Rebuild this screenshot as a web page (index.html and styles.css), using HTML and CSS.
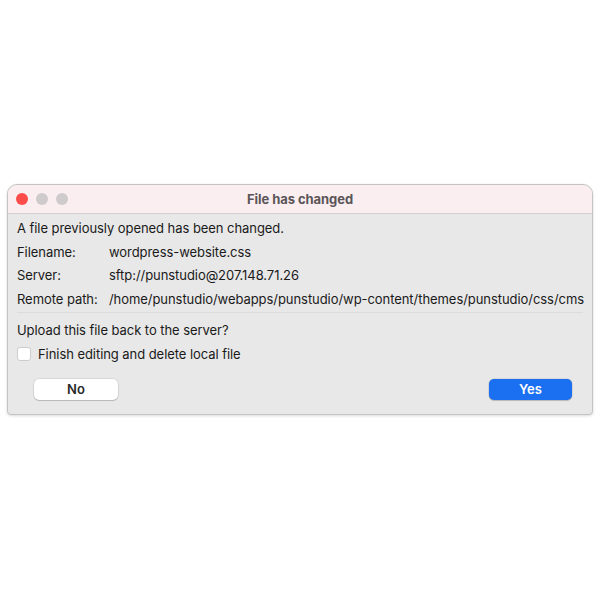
FILE: index.html
```html
<!DOCTYPE html>
<html lang="en">
<head>
    <meta charset="UTF-8">
    <meta name="viewport" content="width=device-width, initial-scale=1.0">
    <title>File has changed</title>
    <link rel="stylesheet" href="styles.css">
</head>
<body>
    <div class="dialog">
        <div class="titlebar">
            <div class="lights">
                <span class="light close"></span>
                <span class="light"></span>
                <span class="light"></span>
            </div>
            <div class="title">File has changed</div>
        </div>

        <div class="content">
            <p class="line">A file previously opened has been changed.</p>

            <div class="info-row">
                <span class="label">Filename:</span>
                <span class="value">wordpress-website.css</span>
            </div>
            <div class="info-row">
                <span class="label">Server:</span>
                <span class="value">sftp://punstudio@207.148.71.26</span>
            </div>
            <div class="info-row">
                <span class="label">Remote path:</span>
                <span class="value">/home/punstudio/webapps/punstudio/wp-content/themes/punstudio/css/cms</span>
            </div>

            <div class="divider"></div>

            <p class="line">Upload this file back to the server?</p>

            <label class="check-row">
                <span class="checkbox"></span>
                <span>Finish editing and delete local file</span>
            </label>

            <div class="buttons">
                <button class="btn">No</button>
                <button class="btn primary">Yes</button>
            </div>
        </div>
    </div>
</body>
</html>
```

FILE: styles.css
```css
* {
    margin: 0;
    padding: 0;
    box-sizing: border-box;
}

html, body {
    width: 100%;
    height: 100%;
    background: #ffffff;
    font-family: Inter, "Liberation Sans", Arial, sans-serif;
    font-size: 13px;
    letter-spacing: -0.06px;
    color: #1a1a1a;
}

.dialog {
    margin: 184px 0 0 7px;
    width: 586px;
    height: 231px;
    background: #e8e8e8;
    border: 1px solid #c4c4c4;
    border-radius: 10px 10px 4px 4px;
    overflow: hidden;
    box-shadow: 0 1px 3px rgba(0, 0, 0, 0.15);
}

.titlebar {
    position: relative;
    height: 29px;
    background: #fbeef1;
    border-bottom: 1px solid #d3d0d1;
    display: flex;
    align-items: center;
    justify-content: center;
}

.lights {
    position: absolute;
    left: 8px;
    top: 8px;
    display: flex;
    gap: 8px;
}

.light {
    width: 12px;
    height: 12px;
    border-radius: 50%;
    background: #cfcacb;
}

.light.close {
    background: #fd4d4a;
}

.title {
    font-weight: 700;
    color: #5a5557;
    font-size: 13px;
}

.content {
    padding: 3px 9px 0;
}

.line {
    line-height: 23.5px;
}

.info-row {
    display: flex;
    line-height: 23.5px;
    white-space: nowrap;
}

.label {
    width: 92px;
    flex-shrink: 0;
}

.divider {
    height: 1px;
    background: #dcdcdc;
    margin: 1px 0 6px;
}

.check-row {
    display: flex;
    align-items: center;
    gap: 7px;
    line-height: 23px;
}

.checkbox {
    width: 14px;
    height: 14px;
    background: #ffffff;
    border: 1px solid #cdcdcd;
    border-radius: 3px;
}

.buttons {
    display: flex;
    justify-content: space-between;
    padding: 13px 11px 0 17px;
}

.btn {
    width: 84px;
    height: 21px;
    border: none;
    border-radius: 5px;
    background: #ffffff;
    box-shadow: 0 0 0 0.5px rgba(0, 0, 0, 0.15), 0 1px 1px rgba(0, 0, 0, 0.15);
    font-family: Inter, "Liberation Sans", Arial, sans-serif;
    font-size: 13px;
    font-weight: 600;
    color: #2a2a2a;
}

.btn.primary {
    background: #1a70f0;
    color: #ffffff;
    width: 83px;
}
```
